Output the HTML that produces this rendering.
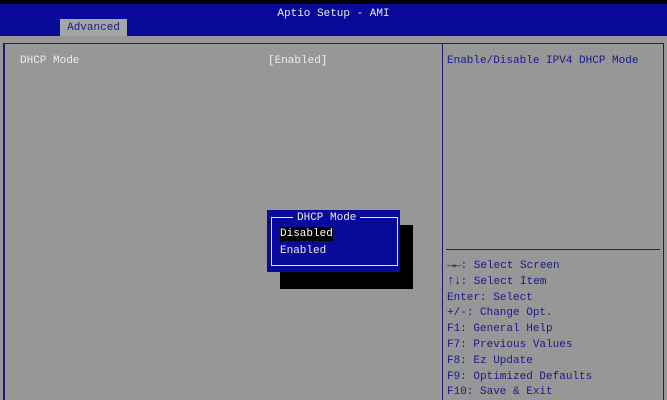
<!DOCTYPE html>
<html style="overflow:hidden;height:400px"><head><style>
body{margin:0;width:667px;height:400px;background:#979797;position:relative;overflow:hidden;font-family:"Liberation Mono",monospace;font-size:11px;}
.a{position:absolute;white-space:pre;line-height:16px;}
</style></head><body>
<div class="a" style="left:0;top:0;width:667px;height:4px;background:#000"></div>
<div class="a" style="left:0;top:4px;width:667px;height:32px;background:#0a0a9a"></div>
<div class="a" style="left:0;top:6px;width:667px;text-align:center;color:#e8e8e8;">Aptio Setup - AMI</div>
<div class="a" style="left:60px;top:19px;width:67px;height:17px;background:#a5a5a5;color:#1a1a8a;text-align:center;line-height:19px">Advanced</div>
<div class="a" style="left:3px;top:43px;width:658px;height:357px;border:1px solid #1a1a7a;border-left:2px solid #1a1a7a;border-bottom:none"></div>
<div class="a" style="left:442px;top:43px;width:1px;height:357px;background:#1a1a7a"></div>
<div class="a" style="left:446px;top:249px;width:214px;height:1px;background:#1a1a7a"></div>
<div class="a" style="left:20px;top:53px;color:#ececec">DHCP Mode</div>
<div class="a" style="left:268px;top:53px;color:#ececec">[Enabled]</div>
<div class="a" style="left:447px;top:53px;color:#1a1a8a">Enable/Disable IPV4 DHCP Mode</div>
<div class="a" style="left:447px;top:259px;color:#1a1a8a;line-height:15.8px"><b style="font-size:13px;line-height:10px;letter-spacing:-1px">→←</b>: Select Screen
<b style="font-size:13px;line-height:10px;letter-spacing:-1px">↑↓</b>: Select Item
Enter: Select
+/-: Change Opt.
F1: General Help
F7: Previous Values
F8: Ez Update
F9: Optimized Defaults
F10: Save &amp; Exit</div>
<div class="a" style="left:280px;top:225px;width:133px;height:64px;background:#000"></div>
<div class="a" style="left:267px;top:210px;width:133px;height:62px;background:#0a0a9a"></div>
<div class="a" style="left:271px;top:217px;width:125px;height:48px;border:1px solid #e8e8e8;border-top:none"></div>
<div class="a" style="left:271px;top:217px;width:126px;height:1px;background:#e8e8e8"></div>
<div class="a" style="left:293px;top:211px;background:#0a0a9a;color:#ececec;padding:0 4px;line-height:14px">DHCP Mode</div>
<div class="a" style="left:280px;top:227px;background:#000;color:#fff;line-height:14px">Disabled</div>
<div class="a" style="left:280px;top:243px;color:#ececec">Enabled</div>
</body></html>
